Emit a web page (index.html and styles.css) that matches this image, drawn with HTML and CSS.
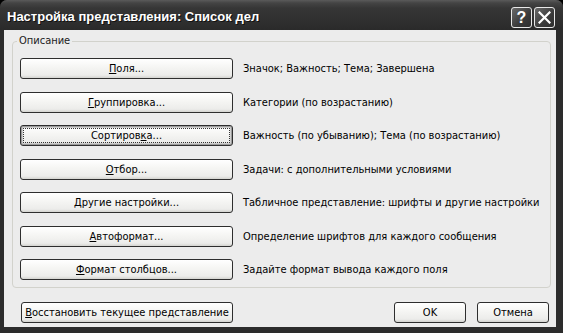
FILE: index.html
```html
<!DOCTYPE html>
<html lang="ru">
<head>
<meta charset="utf-8">
<title>Настройка представления</title>
<link rel="stylesheet" href="styles.css">
</head>
<body>
<div class="window">
  <div class="titlebar">
    <span class="title">Настройка представления: Список дел</span>
    <div class="ctrls">
      <span class="cbtn help">?</span>
      <span class="cbtn close">
        <svg width="13" height="13" viewBox="0 0 13 13"><path d="M1.5 1.5 L11.5 11.5 M11.5 1.5 L1.5 11.5" stroke="#fff" stroke-width="2.2" stroke-linecap="square"/></svg>
      </span>
    </div>
  </div>
  <div class="client">
    <div class="group">
      <span class="legend">Описание</span>
      <div class="rows">
        <button class="btn"><u>П</u>оля...</button>
        <span class="desc">Значок; Важность; Тема; Завершена</span>
        <button class="btn"><u>Г</u>руппировка...</button>
        <span class="desc">Категории (по возрастанию)</span>
        <button class="btn focus">Сортиров<u>к</u>а...</button>
        <span class="desc">Важность (по убыванию); Тема (по возрастанию)</span>
        <button class="btn"><u>О</u>тбор...</button>
        <span class="desc">Задачи: с дополнительными условиями</span>
        <button class="btn"><u>Д</u>ругие настройки...</button>
        <span class="desc">Табличное представление: шрифты и другие настройки</span>
        <button class="btn"><u>А</u>втоформат...</button>
        <span class="desc">Определение шрифтов для каждого сообщения</span>
        <button class="btn"><u>Ф</u>ормат столбцов...</button>
        <span class="desc">Задайте формат вывода каждого поля</span>
      </div>
    </div>
    <div class="footer">
      <button class="btn restore"><u>В</u>осстановить текущее представление</button>
      <button class="btn small ok">OK</button>
      <button class="btn small">Отмена</button>
    </div>
  </div>
</div>
</body>
</html>
```
FILE: styles.css
```css
html, body {
  margin: 0;
  padding: 0;
  background: #000;
}
.window {
  width: 563px;
  height: 333px;
  display: flex;
  flex-direction: column;
  background: #2c2c2c;
  border-radius: 7px 7px 0 0;
  overflow: hidden;
  font-family: "DejaVu Sans Condensed", "DejaVu Sans", sans-serif;
  font-size: 11px;
  color: #000;
}
.titlebar {
  height: 30px;
  flex: none;
  display: flex;
  align-items: center;
  justify-content: space-between;
  padding: 0 8px 0 7px;
  background: linear-gradient(#5a5a5a 0, #444 3px, #363636 8px, #303030 20px, #2a2a2a 30px);
  box-sizing: border-box;
}
.title {
  color: #fff;
  font-family: "Liberation Sans", Arial, sans-serif;
  font-weight: bold;
  font-size: 13px;
  text-shadow: 1px 1px 0 #111;
  padding-top: 2px;
}
.ctrls {
  display: flex;
  gap: 2px;
  padding-top: 5px;
}
.cbtn {
  width: 21px;
  height: 21px;
  box-sizing: border-box;
  border: 1px solid #e8e8e8;
  border-radius: 3px;
  background: linear-gradient(135deg, #6a6a6a, #3a3a3a 60%, #2e2e2e);
  display: flex;
  align-items: center;
  justify-content: center;
  color: #fff;
  font-family: "Liberation Sans", sans-serif;
  font-weight: bold;
  font-size: 16px;
}
.client {
  flex: 1;
  margin: 0 7px 6px 4px;
  background: #ececec;
  padding: 11px 5px 0 8px;
  display: flex;
  flex-direction: column;
}
.group {
  position: relative;
  height: 247px;
  box-sizing: border-box;
  border: 1px solid #d2d2cc;
  border-radius: 4px;
  padding: 16px 7px 0 7px;
}
.legend {
  position: absolute;
  top: -8px;
  left: 4px;
  padding: 0 2px;
  background: #ececec;
  color: #222;
}
.rows {
  display: grid;
  grid-template-columns: 213px 1fr;
  grid-auto-rows: 21px;
  row-gap: 12.5px;
  column-gap: 10px;
  align-items: center;
}
.btn {
  position: relative;
  height: 21px;
  box-sizing: border-box;
  border: 1px solid #2e2e2e;
  border-radius: 3px;
  background: linear-gradient(#ffffff, #f6f6f4 40%, #ececea 85%, #d4d4d0);
  font-family: inherit;
  font-size: 11px;
  color: #000;
  padding: 0;
  margin: 0;
}
.btn.focus {
  box-shadow: inset 0 0 0 1px #9c9c9c, inset 0 0 0 2px #cfcfcf;
}
.btn.focus::after {
  content: "";
  position: absolute;
  inset: 2px;
  border: 1px dotted #333;
}
.desc {
  white-space: nowrap;
}
.footer {
  display: flex;
  align-items: center;
  margin-top: 14px;
  padding: 0 2px 0 9px;
}
.restore {
  width: 212px;
}
.small {
  width: 72px;
}
.ok {
  margin-left: auto;
  margin-right: 11px;
}
```
